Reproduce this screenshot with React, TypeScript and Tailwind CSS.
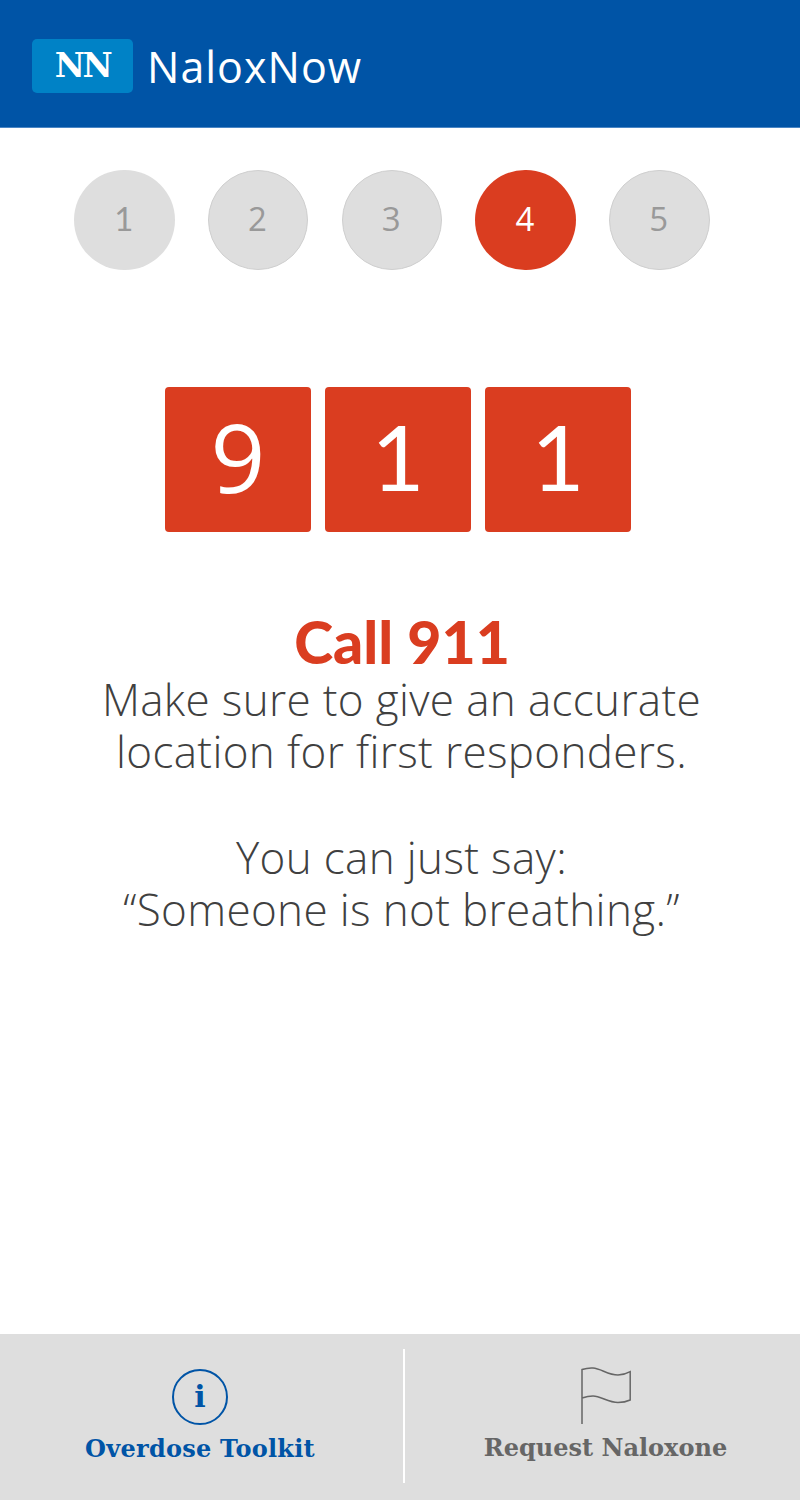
const steps = [1, 2, 3, 4, 5];

function FlagIcon() {
  return (
    <svg width="50" height="58" viewBox="0 0 50 58" fill="none" stroke="#666666" strokeWidth="1.5" className="block">
      <path d="M1 57V2.5C5 1.2 9 .8 12 1C20 1.5 27 8 37 8C42 8 46 6.5 49.2 4.7V33C46 34.5 42 35.5 37 35.5C27 35.5 20 29 12 29C8 29 4 30 1 31" />
    </svg>
  );
}

export default function App() {
  return (
    <div className="flex flex-col w-[800px] h-[1500px] bg-white font-['Open_Sans',sans-serif]">
      {/* Header */}
      <header className="flex items-center h-[128px] pl-[32px] pt-[5px] bg-[#0054a6] border-b border-[#4a86c5]">
        <div className="flex items-center justify-center w-[101px] h-[54px] rounded-[5px] bg-[#0082c6] text-white text-[33px] font-bold tracking-[-2.5px] font-['DejaVu_Serif',serif]">
          NN
        </div>
        <div className="ml-[14px] text-white text-[43px] font-normal tracking-[1px] leading-none">NaloxNow</div>
      </header>

      {/* Step indicator */}
      <div className="flex justify-center gap-[33.25px] mt-[41.5px] pr-[16.5px]">
        {steps.map((n) => (
          <div
            key={n}
            className={
              n === 4
                ? "flex items-center justify-center w-[100.5px] h-[100.5px] pb-[3px] pr-[1px] rounded-full bg-[#da3d20] text-white text-[33px]"
                : n === 1
                ? "flex items-center justify-center w-[100.5px] h-[100.5px] pb-[3px] pr-[1px] rounded-full bg-[#dedede] text-[#999999] text-[33px] font-['Lato',sans-serif]"
                : "flex items-center justify-center w-[100.5px] h-[100.5px] pb-[3px] pr-[1px] rounded-full bg-[#dedede] border border-[#cfcfcf] text-[#999999] text-[33px]"
            }
          >
            {n}
          </div>
        ))}
      </div>

      {/* 911 tiles */}
      <div className="flex justify-center gap-[14px] mt-[117px] pr-[4px]">
        <div className="flex items-center justify-center w-[146px] h-[145px] pb-[8px] rounded-[4px] bg-[#da3d20] text-white text-[96px] leading-none">
          9
        </div>
        <div className="flex items-center justify-center w-[146px] h-[145px] pb-[8px] rounded-[4px] bg-[#da3d20] text-white text-[92px] leading-none font-['Lato',sans-serif]">
          1
        </div>
        <div className="flex items-center justify-center w-[146px] h-[145px] pb-[8px] rounded-[4px] bg-[#da3d20] text-white text-[92px] leading-none font-['Lato',sans-serif]">
          1
        </div>
      </div>

      {/* Message */}
      <div className="flex flex-col items-center mt-[80px] text-center text-[#404040]">
        <h1 className="text-[#da3d20] text-[59px] font-black leading-[60px] ml-[4px] font-['Lato',sans-serif]">Call 911</h1>
        <p className="text-[44px] font-light tracking-[0.35px] leading-[52px] mt-[1px] ml-[3px]">
          Make sure to give an accurate
          <br />
          location for first responders.
        </p>
        <p className="text-[44px] font-light tracking-[0.35px] leading-[52px] mt-[54px] ml-[3px]">
          You can just say:
          <br />
          “Someone is not breathing.”
        </p>
      </div>

      {/* Footer nav */}
      <footer className="flex items-center mt-auto h-[166px] bg-[#dedede]">
        <div className="flex flex-col items-center w-[403px] pr-[3px] text-[#0054a6]">
          <div className="flex items-center justify-center w-[56px] h-[56px] rounded-full border-2 border-[#0054a6] text-[30px] font-bold leading-none font-['DejaVu_Serif',serif]">
            i
          </div>
          <span className="mt-[8px] text-[24px] font-bold tracking-[0.25px] leading-[32px] font-['DejaVu_Serif',serif]">Overdose Toolkit</span>
        </div>
        <div className="w-[2px] h-[134px] bg-white mb-[3px]"></div>
        <div className="flex flex-col items-center flex-1 pl-[6px] pb-[4px] text-[#666666]">
          <FlagIcon />
          <span className="mt-[7px] text-[24px] font-bold leading-[32px] font-['DejaVu_Serif',serif]">Request Naloxone</span>
        </div>
      </footer>
    </div>
  );
}
